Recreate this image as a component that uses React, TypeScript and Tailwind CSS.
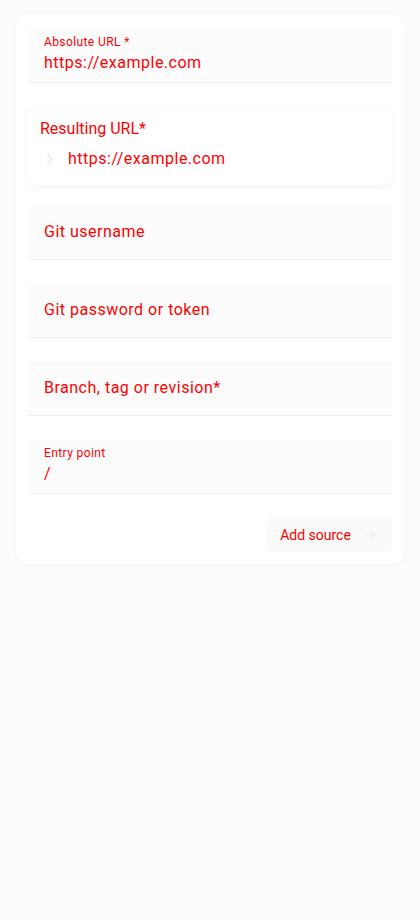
import React from "react";
import { ChevronRight, ArrowRight } from "lucide-react";

function Field({ label, value, big }: { label: string; value?: string; big?: boolean }) {
  if (big) {
    return (
      <div className="h-[55px] bg-[#fcfcfc] border-b border-[#efefef] px-4 flex items-center rounded-t">
        <span className="text-base tracking-[0.5px] text-[#ff0000]">{label}</span>
      </div>
    );
  }
  return (
    <div className="h-[55px] bg-[#fcfcfc] border-b border-[#efefef] px-4 pt-1.5 flex flex-col rounded-t">
      <span className="text-xs leading-4 tracking-[0.4px] text-[#ff0000]">{label}</span>
      <span className="text-base leading-6 mt-px tracking-[0.5px] text-[#ff0000]">{value}</span>
    </div>
  );
}

export default function App() {
  return (
    <div className="min-h-[920px] bg-[#fcfcfc] px-4 pt-[14px]" style={{ fontFamily: "Roboto, sans-serif" }}>
      <div className="bg-white rounded-xl shadow-[0_1px_4px_rgba(0,0,0,0.04)] px-3 pt-[14px] pb-3 flex flex-col">
        <Field label="Absolute URL *" value="https://example.com" />

        <div className="mt-[25px] h-[77px] rounded-lg bg-white shadow-[0_2px_8px_rgba(0,0,0,0.05)] px-3 pt-[9px]">
          <div className="text-base leading-6 text-[#ff0000]">Resulting URL*</div>
          <div className="flex items-center mt-1.5 pl-0.5">
            <ChevronRight size={16} className="text-[#e6e6e6]" />
            <span className="ml-2.5 text-base leading-6 tracking-[0.5px] text-[#ff0000]">https://example.com</span>
          </div>
        </div>

        <div className="mt-5 flex flex-col gap-[23px]">
          <Field label="Git username" big />
          <Field label="Git password or token" big />
          <Field label="Branch, tag or revision*" big />
          <Field label="Entry point" value="/" />
        </div>

        <div className="flex justify-end mt-[23px]">
          <button className="h-[35px] w-[125px] rounded-md bg-[#fafafa] flex items-center justify-center gap-3 text-sm text-[#ff0000]">
            Add source
            <ArrowRight size={16} className="text-[#eeeeee]" />
          </button>
        </div>
      </div>
    </div>
  );
}
